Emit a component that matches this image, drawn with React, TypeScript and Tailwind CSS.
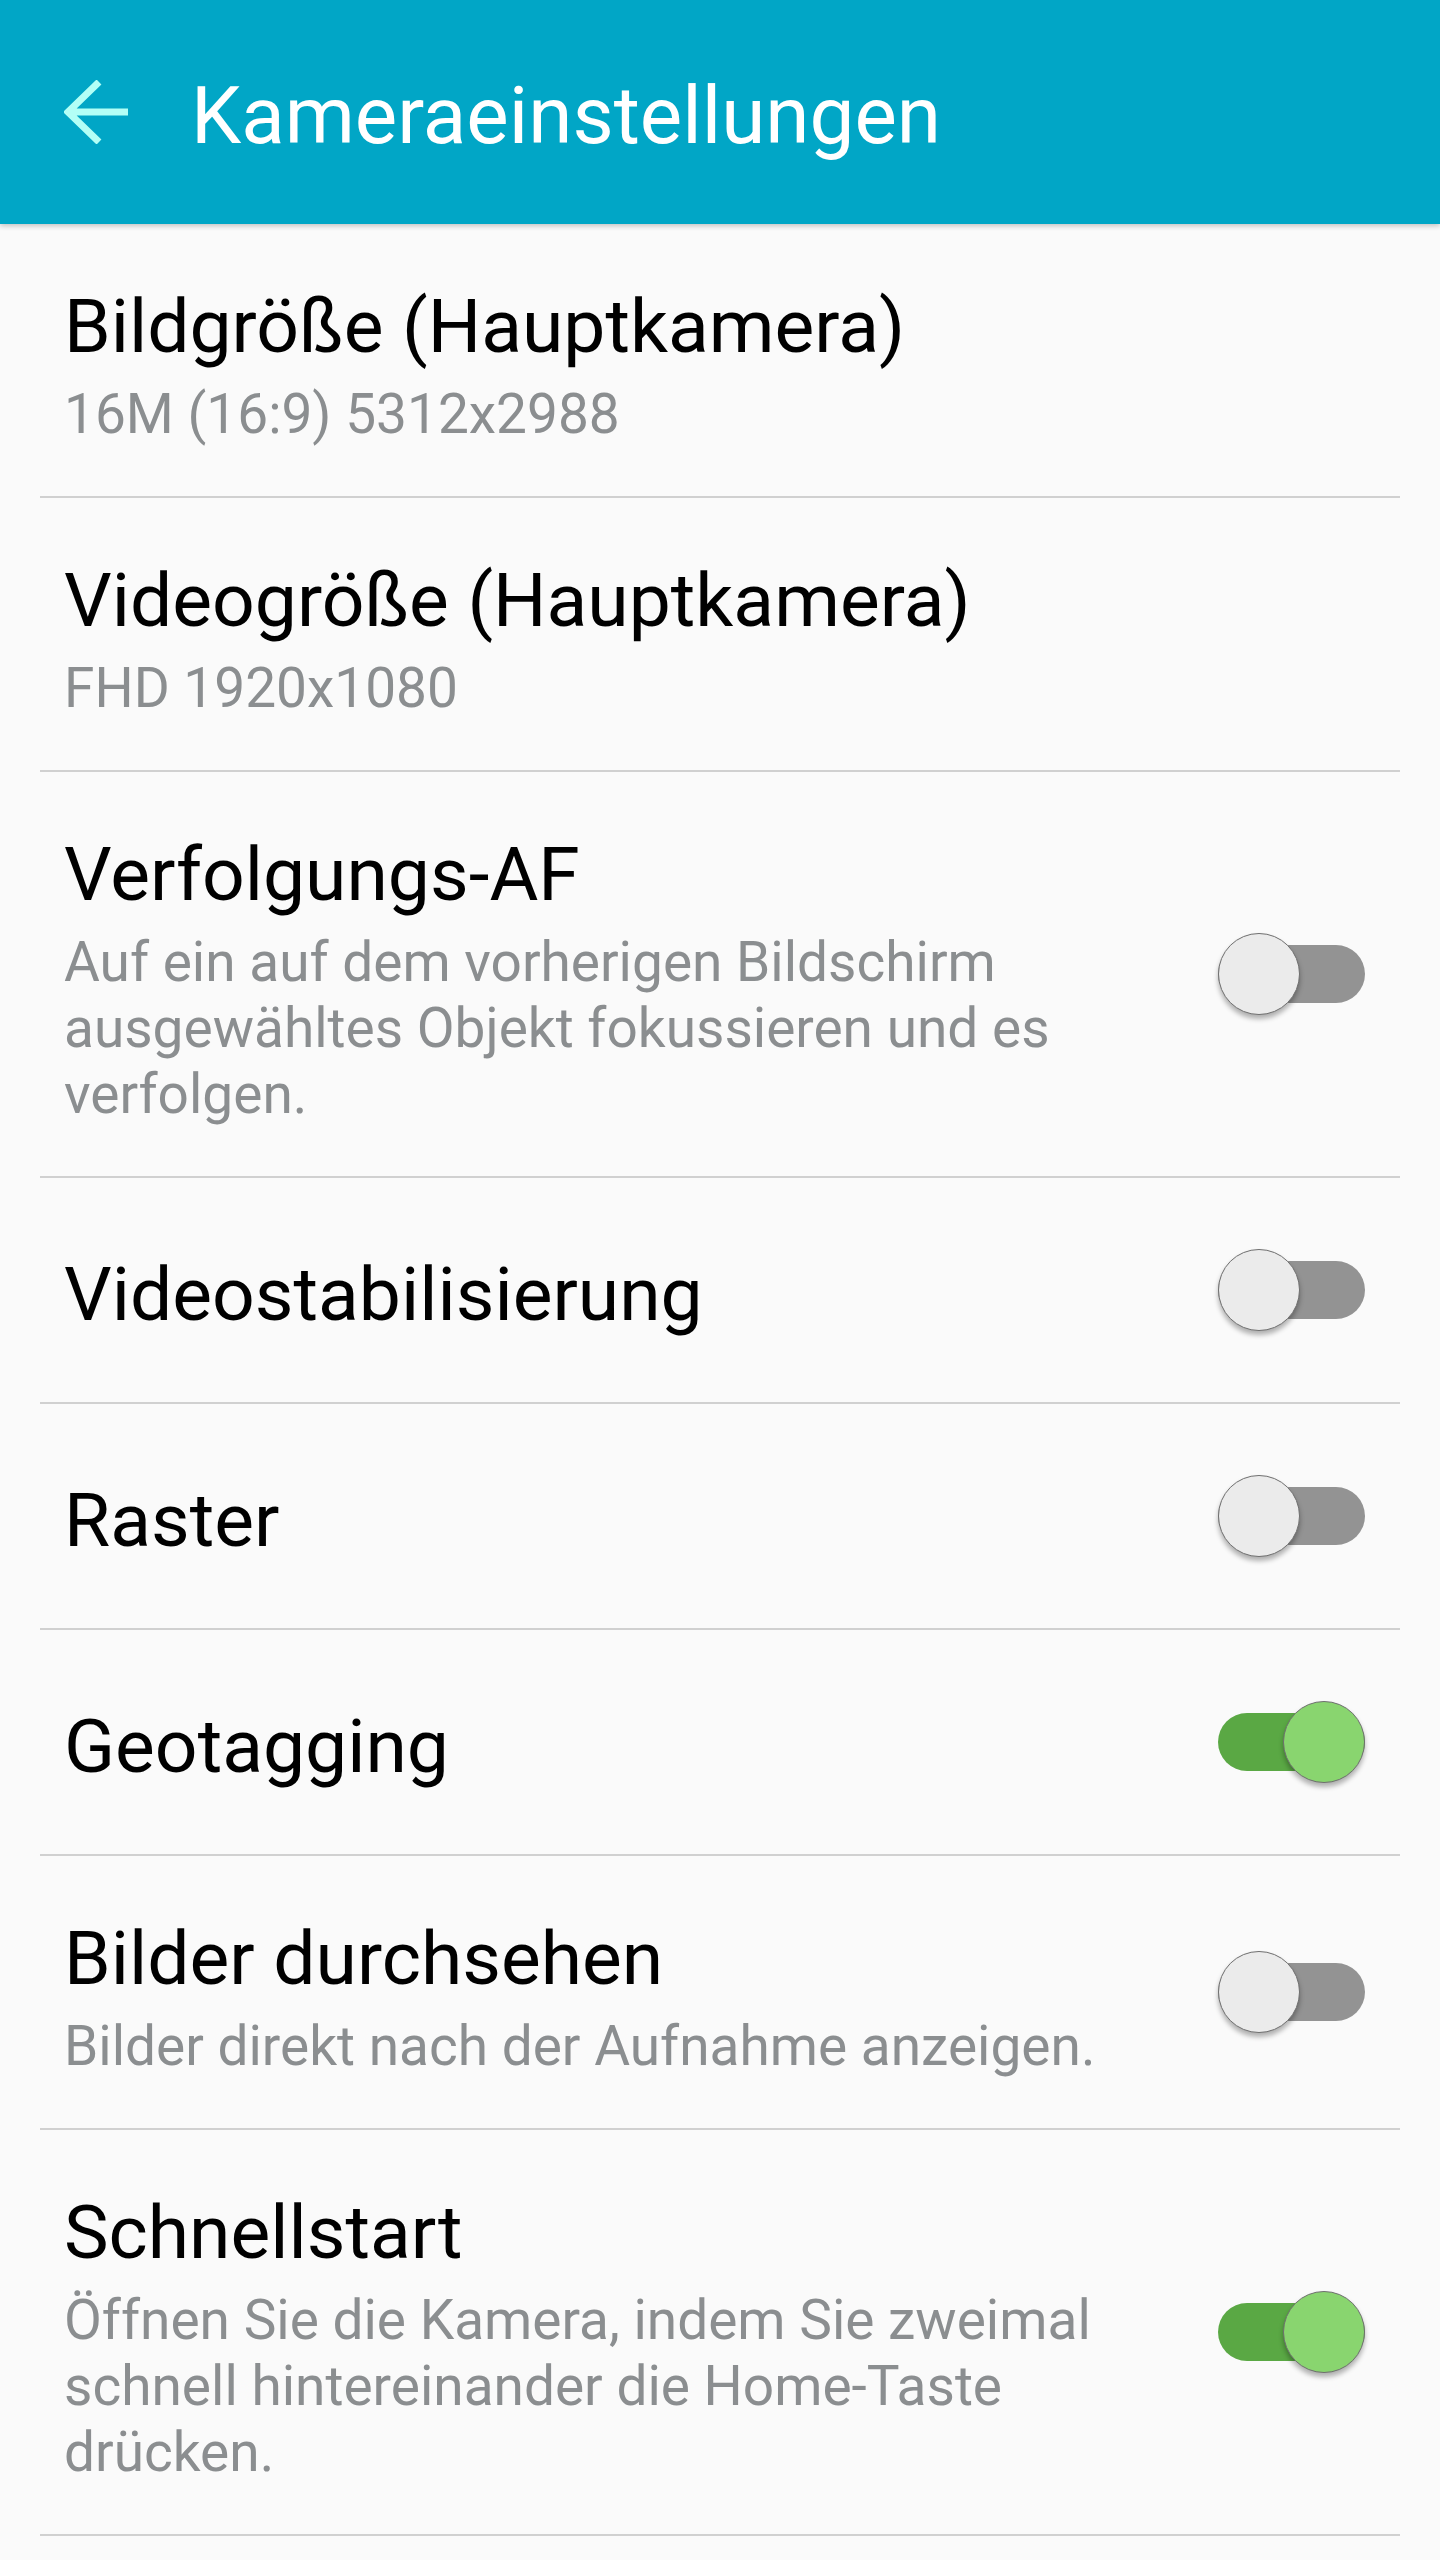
import React from "react";

type Item = {
  title: string;
  desc?: string[];
  toggle?: "on" | "off";
};

const items: Item[] = [
  { title: "Bildgröße (Hauptkamera)", desc: ["16M (16:9) 5312x2988"] },
  { title: "Videogröße (Hauptkamera)", desc: ["FHD 1920x1080"] },
  {
    title: "Verfolgungs-AF",
    desc: [
      "Auf ein auf dem vorherigen Bildschirm",
      "ausgewähltes Objekt fokussieren und es",
      "verfolgen.",
    ],
    toggle: "off",
  },
  { title: "Videostabilisierung", toggle: "off" },
  { title: "Raster", toggle: "off" },
  { title: "Geotagging", toggle: "on" },
  {
    title: "Bilder durchsehen",
    desc: ["Bilder direkt nach der Aufnahme anzeigen."],
    toggle: "off",
  },
  {
    title: "Schnellstart",
    desc: [
      "Öffnen Sie die Kamera, indem Sie zweimal",
      "schnell hintereinander die Home-Taste",
      "drücken.",
    ],
    toggle: "on",
  },
];

function Toggle({ on }: { on: boolean }) {
  return (
    <div className="relative w-[147px] h-[82px] shrink-0">
      <div
        className={
          "absolute left-0 top-[12px] w-[147px] h-[58px] rounded-full " +
          (on ? "bg-[#5aa844]" : "bg-[#939393]")
        }
      />
      <div
        className={
          "absolute top-0 w-[82px] h-[82px] rounded-full border border-[#6f6f6f] shadow-[0_4px_5px_rgba(0,0,0,0.3)] " +
          (on ? "right-0 bg-[#89d56f]" : "left-0 bg-[#ebebeb]")
        }
      />
    </div>
  );
}

export default function App() {
  return (
    <div
      className="w-[1440px] min-h-[2560px] bg-[#fafafa]"
      style={{ fontFamily: "Roboto, 'Noto Sans', sans-serif" }}
    >
      <header className="relative z-10 h-[224px] bg-[#01a6c6] flex items-center pl-[64px] shadow-[0_2px_5px_rgba(0,0,0,0.22)]">
        <svg width="64" height="64" viewBox="0 0 64 64" className="shrink-0">
          <path
            d="M35 2 L4 32 L35 62 M4 32 L64 32"
            fill="none"
            stroke="#b3fff6"
            strokeWidth="7"
            strokeLinejoin="miter"
          />
        </svg>
        <h1 className="ml-[63px] mt-[8px] text-[80px] leading-[94px] text-white font-normal">
          Kameraeinstellungen
        </h1>
      </header>

      <main>
        {items.map((it, i) => {
          const hasDesc = !!it.desc;
          return (
            <div
              key={i}
              className="mx-[40px] pl-[24px] pr-[35px] border-b-2 border-[#d0d0d0] flex items-center"
            >
              <div
                className={
                  "flex-1 min-w-0 " +
                  (hasDesc ? "pt-[58px] pb-[49px]" : "pt-[72px] pb-[64px]")
                }
              >
                <div className="text-[75px] leading-[88px] text-black whitespace-nowrap">
                  {it.title}
                </div>
                {it.desc && (
                  <div className="mt-[11px] text-[55px] leading-[66px] text-[#8b8e90]">
                    {it.desc.map((l, j) => (
                      <div key={j} className="whitespace-nowrap">
                        {l}
                      </div>
                    ))}
                  </div>
                )}
              </div>
              {it.toggle && <Toggle on={it.toggle === "on"} />}
            </div>
          );
        })}
      </main>
    </div>
  );
}
